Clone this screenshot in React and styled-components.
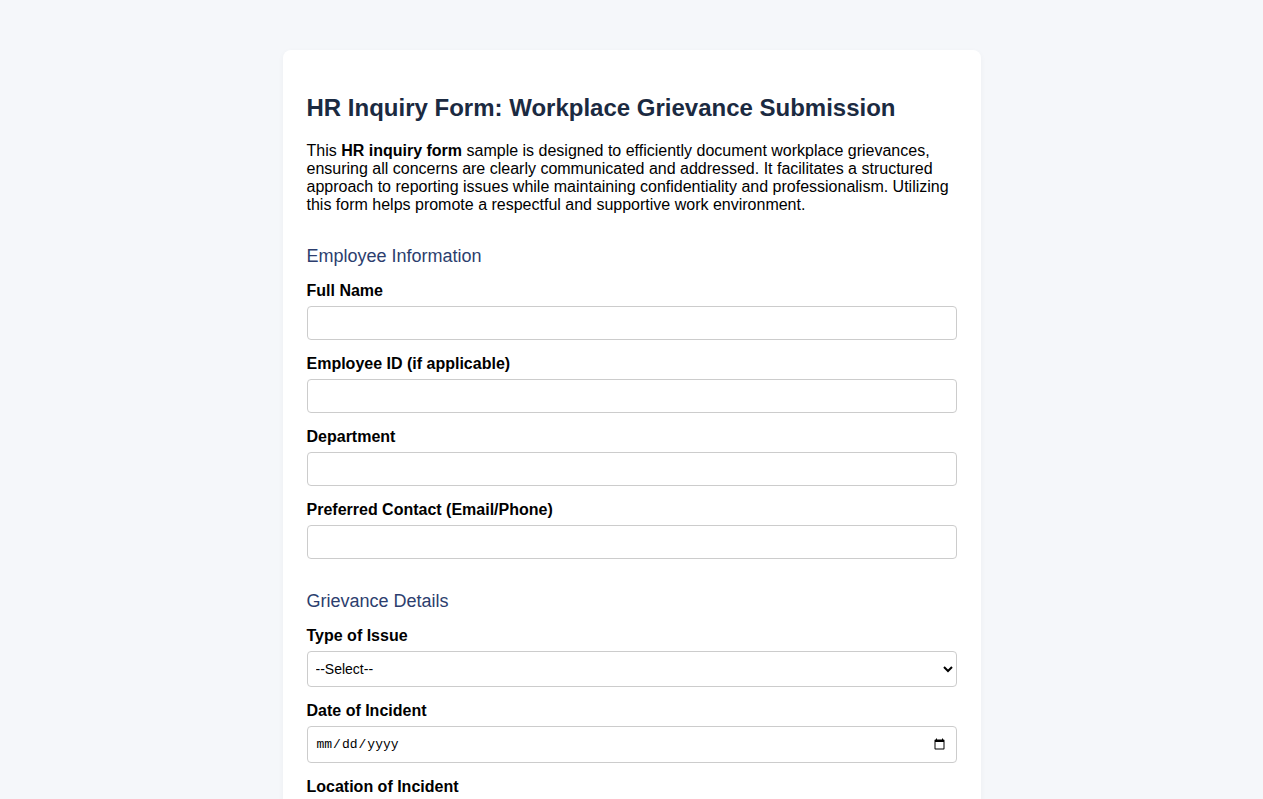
import React from 'react';
import styled, { createGlobalStyle } from 'styled-components';

const GlobalStyle = createGlobalStyle`
	body {
		margin: 0;
		background: #f5f7fa;
		font-family: "Liberation Sans", Arial, sans-serif;
		color: #000;
	}
`;

const Page = styled.div`
	padding: 50px 0;
`;

const Card = styled.div`
	box-sizing: border-box;
	width: 698px;
	margin: 0 auto;
	padding: 24px;
	background: #fff;
	border-radius: 8px;
	box-shadow: 0 2px 6px rgba(0, 0, 0, 0.04);
`;

const Title = styled.h1`
	font-size: 24px;
	font-weight: bold;
	color: #1b2a41;
	margin: 20px 0 20px;
`;

const Intro = styled.p`
	font-size: 16px;
	line-height: 18px;
	margin: 0 0 32px;
`;

const Section = styled.section`
	margin-bottom: 32px;
`;

const SectionTitle = styled.h2`
	font-size: 18px;
	font-weight: normal;
	color: #2c3e6e;
	margin: 0 0 15px;
`;

const Field = styled.div`
	display: flex;
	flex-direction: column;
	margin-bottom: 15px;
`;

const Label = styled.label`
	font-size: 16px;
	font-weight: bold;
	margin-bottom: 6px;
`;

const Input = styled.input`
	box-sizing: border-box;
	width: 100%;
	height: ${p => p.$h || 34}px;
	padding: 0 8px;
	border: 1px solid #ccc;
	border-radius: 4px;
	background: #fff;
	font-family: ${p => p.$mono ? '"Liberation Mono", monospace' : '"Liberation Sans", Arial, sans-serif'};
	font-size: ${p => p.$mono ? '13px' : '14px'};
`;

const Select = styled.select`
	box-sizing: border-box;
	width: 100%;
	height: 36px;
	padding: 0 4px;
	border: 1px solid #ccc;
	border-radius: 4px;
	background: #fff;
	font-family: "Liberation Sans", Arial, sans-serif;
	font-size: 14px;
	color: #000;
`;

const employeeFields = [
	'Full Name',
	'Employee ID (if applicable)',
	'Department',
	'Preferred Contact (Email/Phone)',
];

export default function App() {
	return (
		<Page>
			<GlobalStyle />
			<Card>
				<Title>HR Inquiry Form: Workplace Grievance Submission</Title>
				<Intro>
					This <b>HR inquiry form</b> sample is designed to efficiently document workplace grievances,
					ensuring all concerns are clearly communicated and addressed. It facilitates a structured
					approach to reporting issues while maintaining confidentiality and professionalism. Utilizing
					this form helps promote a respectful and supportive work environment.
				</Intro>

				<Section>
					<SectionTitle>Employee Information</SectionTitle>
					{employeeFields.map(f => (
						<Field key={f}>
							<Label>{f}</Label>
							<Input type="text" />
						</Field>
					))}
				</Section>

				<Section>
					<SectionTitle>Grievance Details</SectionTitle>
					<Field>
						<Label>Type of Issue</Label>
						<Select defaultValue="">
							<option value="">--Select--</option>
							<option>Harassment</option>
							<option>Discrimination</option>
							<option>Workplace Safety</option>
							<option>Other</option>
						</Select>
					</Field>
					<Field>
						<Label>Date of Incident</Label>
						<Input type="date" $mono $h={37} />
					</Field>
					<Field>
						<Label>Location of Incident</Label>
						<Input type="text" />
					</Field>
					<Field>
						<Label>Description of the Grievance</Label>
						<Input type="text" $h={90} />
					</Field>
				</Section>
			</Card>
		</Page>
	);
}
